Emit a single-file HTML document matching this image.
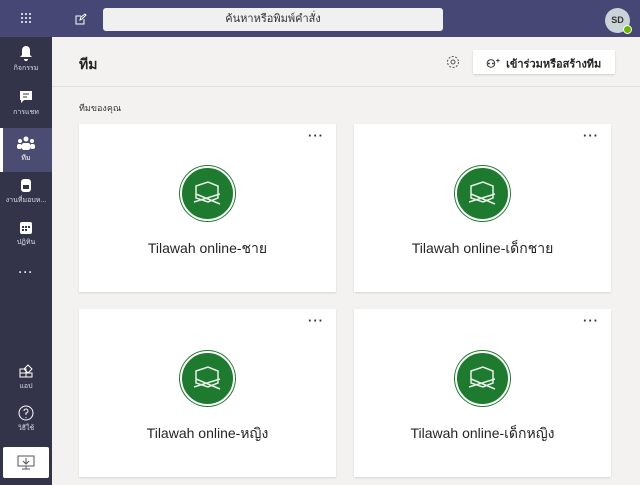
<!DOCTYPE html>
<html><head><meta charset="utf-8"><style>
*{margin:0;padding:0;box-sizing:border-box}
body{width:640px;height:485px;overflow:hidden;background:#f3f2f1;font-family:"Liberation Sans","Noto Sans CJK SC",sans-serif;position:relative}
.top{position:absolute;left:0;top:0;width:640px;height:37px;background:#464775}
.side{position:absolute;left:0;top:37px;width:52px;height:448px;background:#33344a}
.search{position:absolute;left:103px;top:8px;width:340px;height:23px;background:#f0f0f0;border-radius:3px;text-align:center;font-size:11px;line-height:23px;color:#333}
.av{position:absolute;left:605px;top:8px;width:25px;height:25px;border-radius:50%;background:#c9d3d8;font-size:9px;font-weight:bold;color:#333;text-align:center;line-height:25px}
.av i{position:absolute;right:-2px;bottom:-1px;width:9px;height:9px;border-radius:50%;background:#6bb700;border:1px solid #fff}
.it{position:absolute;left:0;width:52px;text-align:center;color:#dcdce6;font-size:7px}
.it svg{display:block;margin:0 auto 2px}
.card{position:absolute;width:257px;height:168px;background:#fff;box-shadow:0 1px 2px rgba(0,0,0,.12);text-align:center}
.card .d{position:absolute;right:12px;top:4px;font-size:13px;letter-spacing:1px;color:#333;font-weight:bold}
.logo{position:absolute;left:101px;top:42px;width:55px;height:55px;border-radius:50%;background:#1d7a2e;border:2px solid #fff;box-shadow:0 0 0 1px #1d7a2e}
.logo svg{position:absolute;left:0;top:0}
.card .t{position:absolute;left:0;right:0;top:114px;font-size:14px;color:#252423}
</style></head><body>
<div class="top">
<svg style="position:absolute;left:20px;top:12px" width="12" height="12"><g fill="#fff"><circle cx="2" cy="2" r="1"/><circle cx="6" cy="2" r="1"/><circle cx="10" cy="2" r="1"/><circle cx="2" cy="6" r="1"/><circle cx="6" cy="6" r="1"/><circle cx="10" cy="6" r="1"/><circle cx="2" cy="10" r="1"/><circle cx="6" cy="10" r="1"/><circle cx="10" cy="10" r="1"/></g></svg>
<svg style="position:absolute;left:75px;top:13px" width="12" height="12" fill="none" stroke="#fff" stroke-width="1"><path d="M9 6v5H1V3h5M5 7l1-3 4-3 1 1-4 4z"/></svg>
<div class="search">ค้นหาหรือพิมพ์คำสั่ง</div>
<div class="av">SD<i></i></div>
</div>
<div class="side">
<div class="it" style="top:8px"><svg width="14" height="16"><path d="M7 1a4 4 0 0 1 4 4v5l2 2H1l2-2V5a4 4 0 0 1 4-4zM5 14h4a2 2 0 0 1-4 0" fill="#fff"/></svg>กิจกรรม</div>
<div class="it" style="top:52px"><svg width="14" height="16"><path d="M1 2h12v9H5l-3 3v-3H1z" fill="#fff"/><path d="M4 5h6M4 8h4" stroke="#33344a"/></svg>การแชท</div>
<div style="position:absolute;left:0;top:91px;width:52px;height:44px;background:#4b4c72"></div>
<div style="position:absolute;left:0;top:91px;width:3px;height:44px;background:#fff"></div>
<div class="it" style="top:99px;color:#fff"><svg width="18" height="15" fill="#fff"><circle cx="9" cy="3" r="2.5"/><circle cx="3" cy="5" r="2"/><circle cx="15" cy="5" r="2"/><rect x="5" y="7" width="8" height="7" rx="2"/><rect x="0" y="8" width="5" height="5" rx="2"/><rect x="13" y="8" width="5" height="5" rx="2"/></svg>ทีม</div>
<div class="it" style="top:140px"><svg width="14" height="16"><rect x="2" y="2" width="10" height="13" rx="3" fill="#fff"/><rect x="4" y="8" width="6" height="4" fill="#33344a"/></svg>งานที่มอบห...</div>
<div class="it" style="top:184px"><svg width="14" height="14"><rect x="1" y="1" width="12" height="12" rx="2" fill="#fff"/><g fill="#33344a"><rect x="3" y="5" width="2" height="2"/><rect x="6" y="5" width="2" height="2"/><rect x="9" y="5" width="2" height="2"/><rect x="3" y="8" width="2" height="2"/><rect x="6" y="8" width="2" height="2"/></g></svg>ปฏิทิน</div>
<div class="it" style="top:228px;font-size:12px;font-weight:bold;letter-spacing:1px">···</div>
<div class="it" style="top:326px"><svg width="16" height="16" fill="none" stroke="#fff"><path d="M2 6h6v8H2zM2 10h12v4H8M10 2l4 4-4 4-4-4z"/></svg>แอป</div>
<div class="it" style="top:368px"><svg width="16" height="16" fill="none" stroke="#fff"><circle cx="8" cy="8" r="7"/><path d="M6 6a2 2 0 1 1 2 2v2M8 12v1"/></svg>วิธีใช้</div>
<div style="position:absolute;left:3px;top:410px;width:46px;height:31px;background:#fff;border-radius:2px"><svg style="position:absolute;left:14px;top:7px" width="18" height="17" fill="none" stroke="#555"><rect x="1" y="2" width="16" height="10"/><path d="M9 4v6M6 7l3 3 3-3M9 12v3M5 15h8"/></svg></div>
</div>
<div style="position:absolute;left:52px;top:86px;width:588px;height:1px;background:#e1dfdd"></div>
<div style="position:absolute;left:79px;top:54px;font-size:14px;font-weight:bold;color:#252423">ทีม</div>
<svg style="position:absolute;left:446px;top:55px" width="14" height="14" fill="none" stroke="#555"><circle cx="7" cy="7" r="2"/><circle cx="7" cy="7" r="5.5" stroke-dasharray="2 1.5"/></svg>
<div style="position:absolute;left:473px;top:50px;width:142px;height:24px;background:#fff;box-shadow:0 1px 2px rgba(0,0,0,.15);font-size:11px;font-weight:bold;line-height:24px;color:#252423;padding-left:13px;white-space:nowrap">⚇<sup style="font-size:7px">+</sup>&nbsp; เข้าร่วมหรือสร้างทีม</div>
<div style="position:absolute;left:79px;top:101px;font-size:9px;color:#333">ทีมของคุณ</div>
<div class="card" style="left:79px;top:124px"><span class="d">···</span><div class="logo"><svg width="51" height="51" fill="none" stroke="#e8f0e8" stroke-width="1.5"><path d="M14 18l12-4 10 4v12l-10 4-12-4z"/><path d="M12 34l26-8M14 26l24 10"/></svg></div><div class="t">Tilawah online-ชาย</div></div>
<div class="card" style="left:354px;top:124px"><span class="d">···</span><div class="logo"><svg width="51" height="51" fill="none" stroke="#e8f0e8" stroke-width="1.5"><path d="M14 18l12-4 10 4v12l-10 4-12-4z"/><path d="M12 34l26-8M14 26l24 10"/></svg></div><div class="t">Tilawah online-เด็กชาย</div></div>
<div class="card" style="left:79px;top:309px"><span class="d">···</span><div class="logo"><svg width="51" height="51" fill="none" stroke="#e8f0e8" stroke-width="1.5"><path d="M14 18l12-4 10 4v12l-10 4-12-4z"/><path d="M12 34l26-8M14 26l24 10"/></svg></div><div class="t">Tilawah online-หญิง</div></div>
<div class="card" style="left:354px;top:309px"><span class="d">···</span><div class="logo"><svg width="51" height="51" fill="none" stroke="#e8f0e8" stroke-width="1.5"><path d="M14 18l12-4 10 4v12l-10 4-12-4z"/><path d="M12 34l26-8M14 26l24 10"/></svg></div><div class="t">Tilawah online-เด็กหญิง</div></div>
</body></html>
